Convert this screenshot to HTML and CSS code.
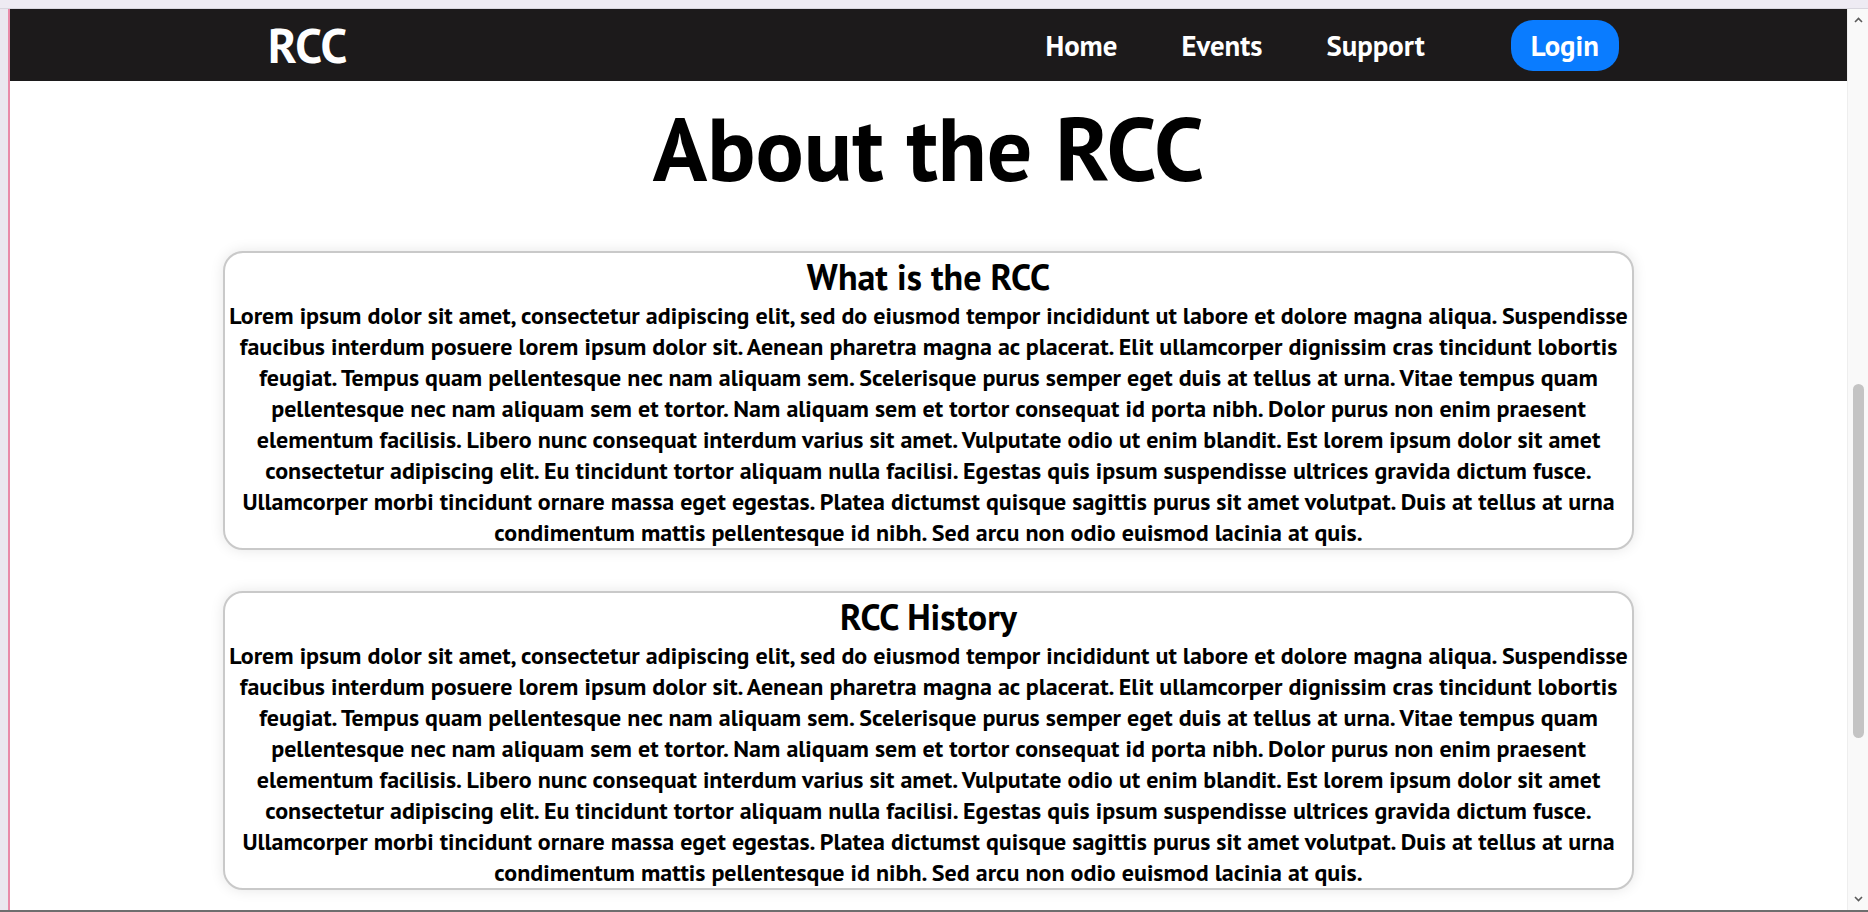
FILE: index.html
```html
<!DOCTYPE html>
<html lang="en">
<head>
<meta charset="utf-8">
<title>About the RCC</title>
<link rel="stylesheet" href="styles.css">
</head>
<body>
<div class="window">
  <div class="topbar"></div>
  <div class="frame">
    <div class="left-edge"></div>
    <div class="viewport">
      <nav class="navbar">
        <a class="brand" href="#">RCC</a>
        <div class="nav-links">
          <a class="nav-link" href="#">Home</a>
          <a class="nav-link" href="#">Events</a>
          <a class="nav-link" href="#">Support</a>
          <a class="login-btn" href="#">Login</a>
        </div>
      </nav>
      <main class="content">
        <h1 class="page-title">About the RCC</h1>
        <section class="card">
          <h2 class="card-title">What is the RCC</h2>
          <p class="card-text">Lorem ipsum dolor sit amet, consectetur adipiscing elit, sed do eiusmod tempor incididunt ut labore et dolore magna aliqua. Suspendisse faucibus interdum posuere lorem ipsum dolor sit. Aenean pharetra magna ac placerat. Elit ullamcorper dignissim cras tincidunt lobortis feugiat. Tempus quam pellentesque nec nam aliquam sem. Scelerisque purus semper eget duis at tellus at urna. Vitae tempus quam pellentesque nec nam aliquam sem et tortor. Nam aliquam sem et tortor consequat id porta nibh. Dolor purus non enim praesent elementum facilisis. Libero nunc consequat interdum varius sit amet. Vulputate odio ut enim blandit. Est lorem ipsum dolor sit amet consectetur adipiscing elit. Eu tincidunt tortor aliquam nulla facilisi. Egestas quis ipsum suspendisse ultrices gravida dictum fusce. Ullamcorper morbi tincidunt ornare massa eget egestas. Platea dictumst quisque sagittis purus sit amet volutpat. Duis at tellus at urna condimentum mattis pellentesque id nibh. Sed arcu non odio euismod lacinia at quis.</p>
        </section>
        <section class="card">
          <h2 class="card-title">RCC History</h2>
          <p class="card-text">Lorem ipsum dolor sit amet, consectetur adipiscing elit, sed do eiusmod tempor incididunt ut labore et dolore magna aliqua. Suspendisse faucibus interdum posuere lorem ipsum dolor sit. Aenean pharetra magna ac placerat. Elit ullamcorper dignissim cras tincidunt lobortis feugiat. Tempus quam pellentesque nec nam aliquam sem. Scelerisque purus semper eget duis at tellus at urna. Vitae tempus quam pellentesque nec nam aliquam sem et tortor. Nam aliquam sem et tortor consequat id porta nibh. Dolor purus non enim praesent elementum facilisis. Libero nunc consequat interdum varius sit amet. Vulputate odio ut enim blandit. Est lorem ipsum dolor sit amet consectetur adipiscing elit. Eu tincidunt tortor aliquam nulla facilisi. Egestas quis ipsum suspendisse ultrices gravida dictum fusce. Ullamcorper morbi tincidunt ornare massa eget egestas. Platea dictumst quisque sagittis purus sit amet volutpat. Duis at tellus at urna condimentum mattis pellentesque id nibh. Sed arcu non odio euismod lacinia at quis.</p>
        </section>
      </main>
    </div>
    <div class="scrollbar">
      <div class="scroll-arrow">
        <svg width="9" height="6" viewBox="0 0 9 6"><path d="M1 5 L4.5 1.5 L8 5" fill="none" stroke="#5a5a5a" stroke-width="1.6"/></svg>
      </div>
      <div class="scroll-track"><div class="scroll-thumb"></div></div>
      <div class="scroll-arrow">
        <svg width="9" height="6" viewBox="0 0 9 6"><path d="M1 1 L4.5 4.5 L8 1" fill="none" stroke="#5a5a5a" stroke-width="1.6"/></svg>
      </div>
    </div>
  </div>
  <div class="bottomline"></div>
</div>
</body>
</html>
```
FILE: styles.css
```css
html, body {
  margin: 0;
  padding: 0;
  height: 100%;
  overflow: hidden;
  background: #ffffff;
}

body {
  font-family: "PT Sans", "Liberation Sans", sans-serif;
  font-weight: bold;
  color: #000;
}

.window {
  display: flex;
  flex-direction: column;
  height: 912px;
}

.topbar {
  height: 8px;
  background: #eeebf3;
  border-bottom: 1px solid #d8d6de;
  flex: none;
}

.frame {
  flex: 1;
  display: flex;
  min-height: 0;
}

.left-edge {
  width: 8px;
  background: #ebe7f0;
  border-right: 2px solid #e98aa9;
  flex: none;
}

.viewport {
  flex: 1;
  min-width: 0;
  overflow: hidden;
  background: #fff;
}

.navbar {
  height: 72px;
  background: #1c1a1b;
  display: flex;
  align-items: center;
  padding: 0 228px 0 258px;
}

.brand {
  font-size: 48px;
  color: #fff;
  text-decoration: none;
  line-height: 1;
}

.nav-links {
  margin-left: auto;
  display: flex;
  align-items: center;
  gap: 64px;
}

.nav-link {
  font-size: 28.8px;
  color: #fff;
  text-decoration: none;
}

.login-btn {
  margin-left: 22px;
  font-size: 28.8px;
  color: #fff;
  text-decoration: none;
  background: #0a7cff;
  border-radius: 22px;
  height: 51px;
  padding: 0 20px;
  display: flex;
  align-items: center;
  box-sizing: border-box;
}

.content {
  display: flex;
  flex-direction: column;
  align-items: center;
}

.page-title {
  font-size: 90px;
  margin: 8px 0 45px;
  line-height: normal;
  text-align: center;
}

.card {
  width: 1411px;
  box-sizing: border-box;
  border: 2px solid #c9c9c9;
  border-radius: 20px;
  box-shadow: 0 0 14px rgba(0, 0, 0, 0.1);
  text-align: center;
  padding: 0 4px;
  margin-bottom: 41px;
  background: #fff;
}

.card-title {
  font-size: 36px;
  margin: 0;
  line-height: normal;
}

.card-text {
  font-size: 24px;
  margin: 0;
  line-height: normal;
}

.scrollbar {
  width: 21px;
  flex: none;
  background: #f9f9f9;
  border-left: 1px solid #eeeeee;
  box-sizing: border-box;
  display: flex;
  flex-direction: column;
}

.scroll-arrow {
  height: 22px;
  display: flex;
  align-items: center;
  justify-content: center;
  flex: none;
}

.scroll-track {
  flex: 1;
  display: flex;
  flex-direction: column;
  align-items: center;
}

.scroll-thumb {
  margin-top: 353px;
  width: 11px;
  height: 354px;
  border-radius: 6px;
  background: #c4c4c4;
}

.bottomline {
  height: 2px;
  background: #6e6e6e;
  flex: none;
}
```
